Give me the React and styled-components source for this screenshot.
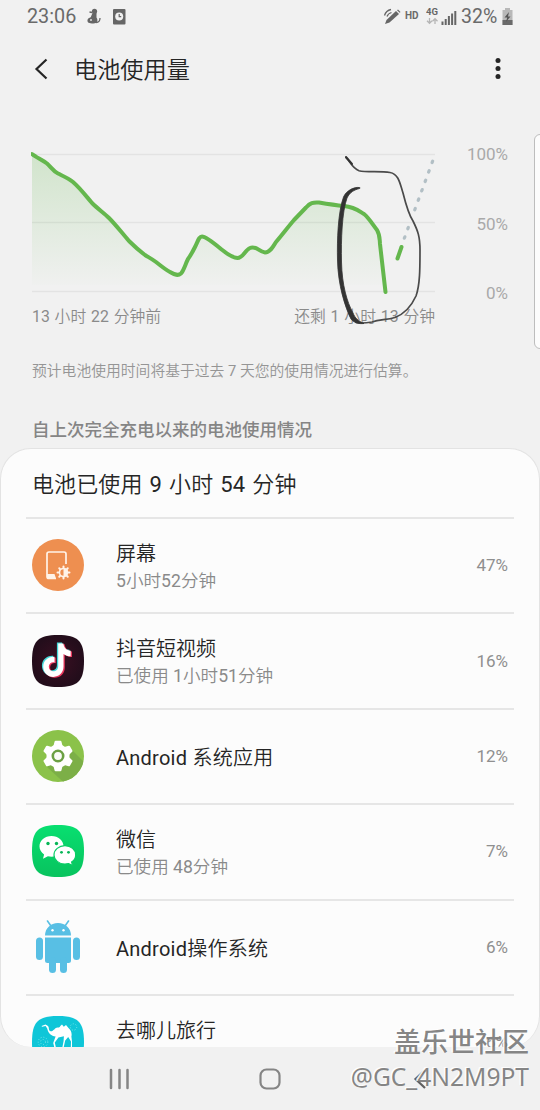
import React from "react";
import styled, { createGlobalStyle } from "styled-components";

const GlobalStyle = createGlobalStyle`
* {
  box-sizing: border-box;
}
body {
  margin: 0;
  background-color: #f1f1f1;
  font-family: Roboto, "Noto Sans CJK SC", sans-serif;
}
`;

const StyledScreen = styled.div`
position: relative;
display: flex;
flex-direction: column;
width: 540px;
height: 1110px;
overflow: hidden;
background-color: #f1f1f1;
`;

const StyledStatusBar = styled.div`
display: flex;
align-items: center;
height: 33px;
padding: 0 27px 0 27px;
color: #6a6a6a;
`;

const StyledClock = styled.span`
font-size: 19.8px;
width: 58px;
line-height: 33px;
`;

const StyledStatusGroup = styled.div`
display: flex;
align-items: center;
margin-left: ${(props) => (props.$end ? "auto" : "0")};
`;

const StyledHd = styled.span`
font-size: 10px;
font-weight: 700;
width: 21px;
margin-top: -3px;
`;

const StyledBattery = styled.span`
font-size: 19.5px;
line-height: 33px;
width: 41px;
white-space: nowrap;
`;

const StyledHeader = styled.header`
display: flex;
align-items: center;
height: 71px;
padding: 0 37px 0 32px;
`;

const StyledTitle = styled.h1`
flex: 1;
margin: 2px 0 0 22px;
font-size: 23.2px;
line-height: 30px;
font-weight: 350;
color: #252525;
`;

const StyledChartSection = styled.section`
display: flex;
flex-direction: column;
height: 307px;
padding: 40px 32px 0 32px;
`;

const StyledChartRow = styled.div`
display: flex;
justify-content: space-between;
height: 160px;
`;

const StyledScale = styled.div`
display: flex;
flex-direction: column;
justify-content: space-between;
height: 159px;
text-align: right;
font-size: 17px;
line-height: 20px;
color: #a9a9a9;
`;

const StyledRange = styled.div`
display: flex;
justify-content: space-between;
width: 403px;
margin-top: 1px;
font-size: 15.8px;
line-height: 24px;
font-weight: 350;
word-spacing: 1px;
color: #8a8a8a;
`;

const StyledNote = styled.p`
margin: 30px 0 0;
font-size: 14.8px;
line-height: 24px;
font-weight: 350;
color: #959595;
`;

const StyledSectionTitle = styled.h2`
margin: 0;
height: 37px;
padding-left: 32px;
font-size: 17.5px;
line-height: 39px;
font-weight: 500;
color: #858585;
`;

const StyledCard = styled.section`
height: 599px;
padding: 0 25px;
overflow: hidden;
background-color: #fcfcfc;
border: 1px solid #e3e3e3;
border-bottom: none;
border-radius: 31px;
`;

const StyledCardTitle = styled.h3`
margin: 0;
height: 68px;
padding: 0 6px;
font-size: 22px;
line-height: 71px;
font-weight: 350;
letter-spacing: 0.1px;
word-spacing: 1.6px;
color: #252525;
`;

const StyledRow = styled.div`
display: flex;
align-items: center;
height: 95.4px;
padding: 0 6px 1px;
border-top: 2px solid #e6e6e6;
`;

const StyledRowText = styled.div`
flex: 1;
padding-top: 4px;
padding-left: 32px;
`;

const StyledName = styled.div`
font-size: 20px;
line-height: 26px;
font-weight: 350;
letter-spacing: ${(props) => (props.$latin ? "0.25px" : "0")};
color: #252525;
`;

const StyledUsage = styled.div`
font-size: 17.6px;
line-height: 26px;
margin-top: 1px;
font-weight: 350;
color: #8a8a8a;
`;

const StyledLatin = styled.span`
font-weight: 400;
`;

const StyledPercent = styled.div`
font-size: 17px;
color: #8f8f8f;
`;

const StyledNavBar = styled.nav`
display: flex;
align-items: center;
justify-content: space-between;
flex: 1;
padding: 1px 108px 0 108px;
`;

const StyledEdgePanel = styled.div`
position: absolute;
top: 134px;
right: -6px;
width: 12px;
height: 215px;
background-color: #fcfcfc;
border: 1px solid #bdbdbd;
border-radius: 6px;
`;

const StyledScribble = styled.svg`
position: absolute;
top: 150px;
left: 330px;
`;

const StyledWatermark = styled.div`
position: absolute;
right: 11px;
bottom: 16px;
display: flex;
flex-direction: column;
align-items: flex-end;
color: rgba(112, 112, 112, 0.85);
text-shadow: -1.5px -1.5px 0 rgba(255, 255, 255, 0.9);
white-space: nowrap;
`;

const StyledWatermarkName = styled.span`
font-size: 27px;
line-height: 35px;
font-weight: 500;
margin-bottom: -2px;
`;

const StyledWatermarkUser = styled.span`
font-family: "Noto Sans", sans-serif;
font-size: 24.6px;
line-height: 35px;
`;

const squircle = "M26 0C46 0 52 6 52 26S46 52 26 52 0 46 0 26 6 0 26 0Z";

// the light CJK weight is too thin for letters and digits
function MixedText({ children }) {
    return children.split(/([A-Za-z0-9]+)/).map((part, i) => {
        return i % 2 ? <StyledLatin key={i}>{part}</StyledLatin> : part;
    });
}

function ScreenIcon() {
    return (
        <svg width="52" height="52" viewBox="0 0 52 52">
            <circle cx="26" cy="26" r="26" fill="#ee8f50" />
            <path d="M34 25V15a2 2 0 0 0-2-2H17a2 2 0 0 0-2 2v22.500a2 2 0 0 0 2 2h7" fill="none" stroke="#fff3e8" strokeWidth="1.700" />
            <path d="M15 35h7.500l1.500 4.500h-7a2 2 0 0 1-2-2Z" fill="#fff3e8" />
            <g stroke="#fff3e8" strokeWidth="2" strokeLinecap="round">
                {[0, 45, 90, 135, 180, 225, 270, 315].map((a) => (
                    <path key={a} d="M31.500 27.500v1" transform={`rotate(${a} 31.500 33.500)`} />
                ))}
            </g>
            <circle cx="31.500" cy="33.500" r="4" fill="none" stroke="#fff3e8" strokeWidth="1.600" />
            <path d="M31.500 29.500a4 4 0 0 1 0 8Z" fill="#fff3e8" />
        </svg>
    );
}

function DouyinIcon() {
    const note = "M25.500 8h5.200c.4 4.200 3 6.900 7.300 7.300v5.500c-2.700 0-5.100-.8-7.200-2.300v12.700c0 6.200-4.600 10.300-10.200 10.300S10.500 37 10.500 31.300c0-6 4.800-10.500 11.300-10v5.700c-3.200-.6-5.700 1.400-5.700 4.300 0 2.600 2 4.500 4.500 4.500 2.800 0 4.900-1.900 4.900-5Z";
    return (
        <svg width="52" height="52" viewBox="0 0 52 52">
            <defs>
                <radialGradient id="douyin">
                    <stop offset="0" stopColor="#3a0f22" />
                    <stop offset="1" stopColor="#230d1b" />
                </radialGradient>
            </defs>
            <path d={squircle} fill="url(#douyin)" />
            <path d={note} fill="#45d9da" transform="translate(-.6 -.5)" />
            <path d={note} fill="#e8365c" transform="translate(2 1.200)" />
            <path d={note} fill="#ffffff" transform="translate(.7 .4)" />
        </svg>
    );
}

function SettingsIcon() {
    return (
        <svg width="52" height="52" viewBox="0 0 52 52">
            <defs>
                <clipPath id="settings"><circle cx="26" cy="26" r="26" /></clipPath>
            </defs>
            <circle cx="26" cy="26" r="26" fill="#8bc24a" />
            <path d="M39 19l20 20-20 20-24-22Z" fill="#7caf47" clipPath="url(#settings)" />
            <g fill="#ffffff">
                <circle cx="26" cy="26" r="11.500" />
                {[0, 60, 120, 180, 240, 300].map((a) => (
                    <path key={a} d="M21.200 17l1.400-5.400q.2-.8 1-.8h4.800q.8 0 1 .8l1.400 5.400Z" transform={`rotate(${a} 26 26)`} />
                ))}
            </g>
            <circle cx="26" cy="26" r="5.200" fill="#fafcf7" stroke="#6ba043" strokeWidth="2.600" />
        </svg>
    );
}

function WechatIcon() {
    return (
        <svg width="52" height="52" viewBox="0 0 52 52">
            <defs>
                <linearGradient id="wechat" x1="0" y1="0" x2="0" y2="1">
                    <stop offset="0" stopColor="#08df70" />
                    <stop offset="1" stopColor="#08c35e" />
                </linearGradient>
            </defs>
            <path d={squircle} fill="url(#wechat)" />
            <path d="M19.500 11C12.800 11 7.500 15.500 7.500 21.300c0 3.300 1.700 6.200 4.600 8.100L11 33.700l4.900-2.500c1.200.3 2.400.5 3.600.5 6.700 0 12-4.600 12-10.400S26.200 11 19.500 11Z" fill="#ffffff" />
            <path d="M33 20.700c-6.200 0-11 4.100-11 9.200s4.800 9.200 11 9.200c1.300 0 2.500-.2 3.600-.5l4 2-1-3.500c2.500-1.700 4.100-4.300 4.100-7.200 0-5.100-4.700-9.200-10.700-9.200Z" fill="#ffffff" stroke="#09cd65" strokeWidth="1.200" />
            <g fill="#09b658">
                <circle cx="16" cy="18.500" r="1.700" />
                <circle cx="24.500" cy="18.500" r="1.700" />
                <circle cx="29.500" cy="27.300" r="1.400" />
                <circle cx="36.500" cy="27.300" r="1.400" />
            </g>
        </svg>
    );
}

function AndroidIcon() {
    return (
        <svg width="52" height="54" viewBox="0 0 52 54">
            <g fill="#58bfe4">
                <path d="M13 15.500C13 8.500 18.500 3 26 3s13 5.500 13 12.500Z" />
                <path d="M13 17.500h26v23a2.500 2.500 0 0 1-2.500 2.500h-21a2.500 2.500 0 0 1-2.500-2.500Z" />
                <rect x="4" y="17.500" width="7" height="22.500" rx="3.500" />
                <rect x="41" y="17.500" width="7" height="22.500" rx="3.500" />
                <rect x="17" y="37" width="7" height="16" rx="3.500" />
                <rect x="28" y="37" width="7" height="16" rx="3.500" />
            </g>
            <path d="M15.500 1l3.500 5M36.500 1L33 6" stroke="#58bfe4" strokeWidth="1.600" strokeLinecap="round" />
            <circle cx="20.500" cy="10.200" r="1.200" fill="#ffffff" />
            <circle cx="31.500" cy="10.200" r="1.200" fill="#ffffff" />
        </svg>
    );
}

function QunarIcon() {
    return (
        <svg width="52" height="52" viewBox="0 0 52 52">
            <path d={squircle} fill="#0fc6d8" />
            <g fill="none" stroke="#7fe5e9" strokeWidth="0.900" strokeDasharray="1 1.800">
                <circle cx="11" cy="26" r="4.800" />
                <circle cx="11" cy="26" r="2.500" />
                <circle cx="41.500" cy="11" r="3.200" />
            </g>
            <path d="M9.500 10l4-1.500 2.500 1.500c1.500 1.800.2 5 2.800 5.200 3 0 4-3.800 6.800-3.800 1.300-.1 2 .6 2.700-1.300l1.700-1.600 1.800 2.300 2.200-1.800 2.500 3c2.800 2.500 3.600 5.200 2.900 8.600l.6 5v6H38.800l.2-6-2.800-4.500-3 3.500-1.700 7.500h-1.300l1.400-7 .3-4.800-5.500 1.300-3.600 5 1.800 8h-1.400l-2-7.500 2.400-6.500c-4.500-.7-7-2.500-8.400-8l-1.600-2.600-3.500.7Z" fill="#ffffff" />
        </svg>
    );
}

function StatusBar() {
    return (
        <StyledStatusBar>
            <StyledClock>23:06</StyledClock>
            <StyledStatusGroup>
                <svg width="42" height="18" viewBox="0 0 42 18" fill="#666666">
                    <circle cx="9.500" cy="3.300" r="2.600" />
                    <path d="M7.500 5h4v4.500c1.800 2.500 1 6-3 6-4.500 0-6.500-1-6-3.500.3-1.500 1.600-2.300 3.200-2.700Z" />
                    <path d="M11 14.500c2.500 0 4-2 4-4.500M7 4.500L4.500 4" fill="none" stroke="#666666" strokeWidth="1.300" />
                    <circle cx="6" cy="12" r="1" fill="#e0e0e0" />
                    <rect x="28" y="1" width="12.500" height="15.500" rx="1" />
                    <circle cx="34.200" cy="8.500" r="4" fill="#f1f1f1" />
                    <path d="M34.200 6v2.700h2" fill="none" stroke="#666666" strokeWidth="1.200" />
                </svg>
            </StyledStatusGroup>
            <StyledStatusGroup $end>
                <svg width="22" height="18" viewBox="0 0 22 18">
                    <path d="M2 16l1.500-4L13 3l3 3-9.500 8.500Z" fill="#666666" />
                    <path d="M14 2.200l1-.8 2.500 2.500-.8.8Z" fill="#666666" />
                    <path d="M1.500 7.500Q3 2.500 8 1.500M4 8.500Q5 5.500 8.500 4.500" fill="none" stroke="#666666" strokeWidth="1.300" />
                </svg>
                <StyledHd>HD</StyledHd>
                <svg width="35" height="20" viewBox="0 0 35 20">
                    <text x="0" y="8" fontSize="9.500" fontWeight="700" fill="#666666">4G</text>
                    <path d="M3.500 11v5M1 13.800l2.500 2.500L6 13.800M9 17v-5M6.500 14.200L9 11.700l2.500 2.500" fill="none" stroke="#b5b5b5" strokeWidth="1.300" />
                    <g fill="#666666">
                        <rect x="15.500" y="14.500" width="2" height="3.500" />
                        <rect x="18.700" y="12" width="2" height="6" />
                        <rect x="21.900" y="9" width="2" height="9" />
                        <rect x="25.100" y="6.500" width="2" height="11.500" />
                        <rect x="28.300" y="4" width="2" height="14" />
                    </g>
                </svg>
                <StyledBattery>32%</StyledBattery>
                <svg width="11" height="17" viewBox="0 0 11 17">
                    <path d="M3 0h5v2h2.500v15H.5V2H3Z" fill="#b8b8b8" />
                    <path d="M.5 12h10v5H.5Z" fill="#6a6a6a" />
                    <path d="M7 4L2.500 9.500h2.700L4 14l4.500-5.500H6Z" fill="#555555" />
                </svg>
            </StyledStatusGroup>
        </StyledStatusBar>
    );
}

function BatteryChart() {
    const line = "M32 154C36 157 43 160.500 47 163.500C51 167 53 171 58 173.500C63 176 68 178 73 182C80 188 86 196 92 203C98 209 104 213 109 218C116 225 122 233 129 241C134 246 139 250.500 145 255C149 257.500 152 259 156 262C161 266 166 270 170 272C175 275 178 276 181 273.500C184 270 185 265 188 259C191 255 193 251 195 247C198 241 199 236.500 202 236.500C206 236.500 215 244 221 249C226 253 231 257.500 237.500 258C243 258 245 250 250 248C256 245 259 252 265 252.500C270 252.500 273 247 276 242C282 235 288 227 294 220L306 207.500C310 203 313 202 319 202.500C328 204 334 205 344 206C355 207 359 211 364 214C369 218 373 225 377 230C380 235 379.500 238 380 244L385.500 292";
    const dots = [0, 1, 3, 4, 5, 6, 7, 8];
    return (
        <svg width="403" height="160" viewBox="32 144 403 160" overflow="visible">
            <defs>
                <linearGradient id="level" gradientUnits="userSpaceOnUse" x1="0" y1="154" x2="0" y2="285">
                    <stop offset="0" stopColor="#65b94e" stopOpacity="0.23" />
                    <stop offset="1" stopColor="#65b94e" stopOpacity="0.01" />
                </linearGradient>
                <clipPath id="plot"><rect x="31" y="151" width="405" height="144" /></clipPath>
            </defs>
            <path d={`${line}V285H32Z`} fill="url(#level)" />
            <path d="M32 154.500H435M32 222.500H435M32 291.500H435" stroke="#000000" strokeOpacity="0.055" strokeWidth="1.300" />
            <g clipPath="url(#plot)">
                <path d={line} fill="none" stroke="#64b74d" strokeWidth="4" strokeLinecap="round" strokeLinejoin="round" />
            </g>
            <path d="M397.500 258.500L401.500 247" stroke="#64b74d" strokeWidth="4" strokeLinecap="round" />
            {dots.map((i) => (
                <path key={i} d="M-.3 .7L.3 -.7" transform={`translate(${404.6 + i * 3.47} ${237.5 - i * 9.45})`} stroke="#b2bfc5" strokeWidth="3.200" strokeLinecap="round" />
            ))}
        </svg>
    );
}

function Scribble() {
    return (
        <StyledScribble width="100" height="180" viewBox="330 150 100 180" fill="none" stroke="#333333" strokeLinecap="round">
            <path d="M346 157.500C350 161 352 168 359 170.700C366 172.500 380 171 390 172.500C399 174 400 184 403 193C406 205 409 215 413 221C418 231 420 237 420 250C420 268 420 285 416 296C411 307 404 314 395 317.500C386 320 380 319.500 372 322C366 323 361 323.500 356 322.500" strokeWidth="1.700" stroke="#4a4a4a" />
            <path d="M346 157l6 7" strokeWidth="2" />
            <path d="M359.500 187.500C354 186.500 346 191 343.500 197C338 212 337 240 337.500 260C338 285 345 307 351 319C354 323 359 324 364 323.500C358 321 355 318 353 313C347 302 342 285 341.500 262C341 240 342 212 347 198C350 192 354 190 359.500 188.500Z" fill="#333333" strokeWidth="0.800" strokeLinejoin="round" />
        </StyledScribble>
    );
}

const apps = [
    { name: "屏幕", usage: "5小时52分钟", percent: "47%", icon: <ScreenIcon /> },
    { name: "抖音短视频", usage: "已使用 1小时51分钟", percent: "16%", icon: <DouyinIcon /> },
    { name: "Android 系统应用", latin: true, percent: "12%", icon: <SettingsIcon /> },
    { name: "微信", usage: "已使用 48分钟", percent: "7%", icon: <WechatIcon /> },
    { name: "Android操作系统", latin: true, percent: "6%", icon: <AndroidIcon /> },
    { name: "去哪儿旅行", usage: "已使用 22分钟", percent: "6%", icon: <QunarIcon /> },
];

function App() {
    const rows = apps.map((app, i) => {
        return (
            <StyledRow key={i}>
                {app.icon}
                <StyledRowText>
                    <StyledName $latin={app.latin}><MixedText>{app.name}</MixedText></StyledName>
                    {app.usage && <StyledUsage><MixedText>{app.usage}</MixedText></StyledUsage>}
                </StyledRowText>
                <StyledPercent>{app.percent}</StyledPercent>
            </StyledRow>
        );
    });

    return (
        <StyledScreen>
            <GlobalStyle />
            <StatusBar />

            <StyledHeader>
                <svg width="20" height="24" viewBox="0 0 20 24">
                    <path d="M14.500 2.500L4.500 12l10 9.500" fill="none" stroke="#252525" strokeWidth="2.200" />
                </svg>
                <StyledTitle>电池使用量</StyledTitle>
                <svg width="10" height="24" viewBox="0 0 10 24" fill="#252525">
                    <circle cx="5" cy="3.500" r="2.500" />
                    <circle cx="5" cy="11.500" r="2.500" />
                    <circle cx="5" cy="19.500" r="2.500" />
                </svg>
            </StyledHeader>

            <StyledChartSection>
                <StyledChartRow>
                    <BatteryChart />
                    <StyledScale>
                        <span>100%</span>
                        <span>50%</span>
                        <span>0%</span>
                    </StyledScale>
                </StyledChartRow>
                <StyledRange>
                    <span><MixedText>13 小时 22 分钟前</MixedText></span>
                    <span><MixedText>还剩 1 小时 13 分钟</MixedText></span>
                </StyledRange>
                <StyledNote><MixedText>预计电池使用时间将基于过去 7 天您的使用情况进行估算。</MixedText></StyledNote>
            </StyledChartSection>

            <StyledSectionTitle>自上次完全充电以来的电池使用情况</StyledSectionTitle>
            <StyledCard>
                <StyledCardTitle><MixedText>电池已使用 9 小时 54 分钟</MixedText></StyledCardTitle>
                {rows}
            </StyledCard>

            <StyledNavBar>
                <svg width="22" height="22" viewBox="0 0 22 22">
                    <path d="M3 2v18M11.500 2v18M19.500 2v18" stroke="#858585" strokeWidth="2.500" strokeLinecap="round" />
                </svg>
                <svg width="22" height="22" viewBox="0 0 22 22">
                    <rect x="1.500" y="1.500" width="19" height="19" rx="6" fill="none" stroke="#858585" strokeWidth="2.200" />
                </svg>
                <svg width="22" height="22" viewBox="0 0 22 22">
                    <path d="M15 2L5.500 11l9.500 9" fill="none" stroke="#606060" strokeWidth="2.200" />
                </svg>
            </StyledNavBar>

            <StyledEdgePanel />
            <Scribble />
            <StyledWatermark>
                <StyledWatermarkName>盖乐世社区</StyledWatermarkName>
                <StyledWatermarkUser>@GC_4N2M9PT</StyledWatermarkUser>
            </StyledWatermark>
        </StyledScreen>
    );
}

export default App;
